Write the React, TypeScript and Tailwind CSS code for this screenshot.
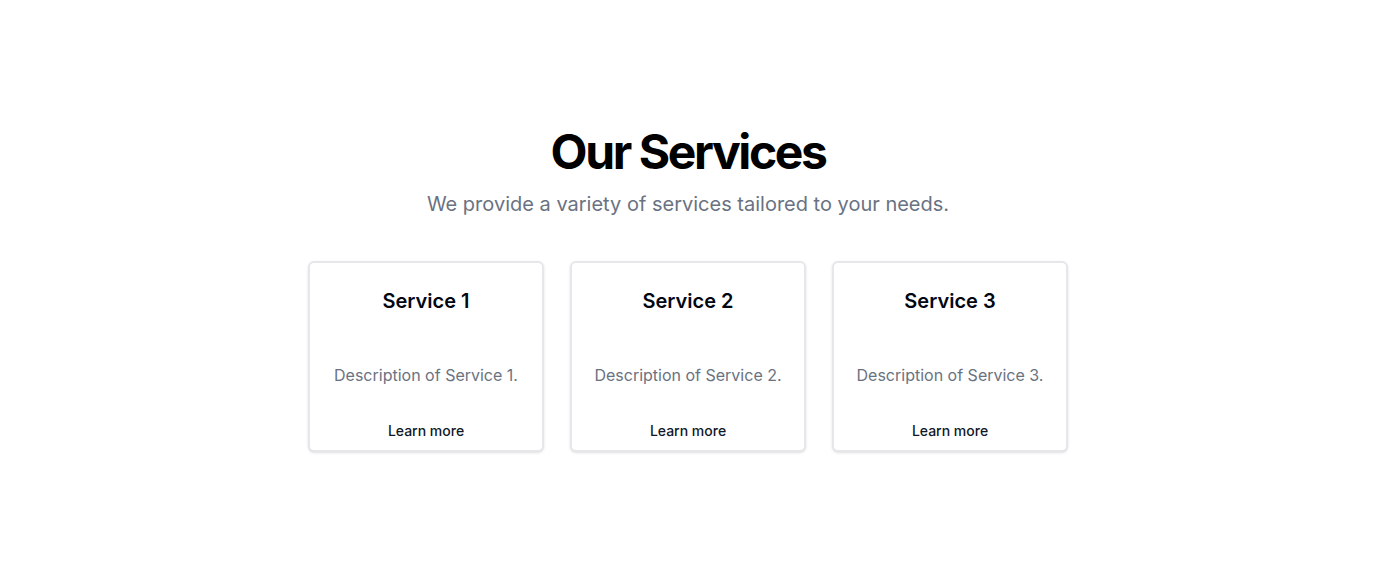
const services = [
  { title: "Service 1", description: "Description of Service 1." },
  { title: "Service 2", description: "Description of Service 2." },
  { title: "Service 3", description: "Description of Service 3." },
];

function ServiceCard({ title, description }: { title: string; description: string }) {
  return (
    <div className="w-[236px] h-[191px] rounded-md border-2 border-gray-200 bg-white shadow-sm flex flex-col items-center pt-6">
      <h3 className="text-xl leading-7 font-semibold text-gray-950">{title}</h3>
      <p className="mt-12 text-base leading-6 text-gray-500">{description}</p>
      <a href="#" className="mt-[34px] text-sm leading-5 font-medium text-gray-900">
        Learn more
      </a>
    </div>
  );
}

export default function App() {
  return (
    <div
      className="min-h-screen bg-white flex flex-col items-center justify-center"
      style={{ fontFamily: "Inter, 'Noto Sans', sans-serif" }}
    >
      <h2 className="text-5xl leading-none font-bold tracking-tighter text-black">Our Services</h2>
      <p className="mt-[14px] text-xl leading-7 text-gray-500">
        We provide a variety of services tailored to your needs.
      </p>
      <div className="mt-[43px] mb-px flex gap-[26px]">
        {services.map((s) => (
          <ServiceCard key={s.title} title={s.title} description={s.description} />
        ))}
      </div>
    </div>
  );
}
